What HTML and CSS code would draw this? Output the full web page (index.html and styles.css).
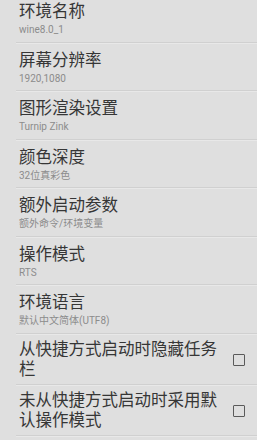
FILE: index.html
```html
<!DOCTYPE html>
<html lang="zh">
<head>
<meta charset="utf-8">
<link rel="stylesheet" href="styles.css">
</head>
<body>
<div class="list">
  <div class="item">
    <div class="title">环境名称</div>
    <div class="sub">wine8.0_1</div>
  </div>
  <div class="item">
    <div class="title">屏幕分辨率</div>
    <div class="sub">1920,1080</div>
  </div>
  <div class="item">
    <div class="title">图形渲染设置</div>
    <div class="sub">Turnip Zink</div>
  </div>
  <div class="item">
    <div class="title">颜色深度</div>
    <div class="sub">32位真彩色</div>
  </div>
  <div class="item">
    <div class="title">额外启动参数</div>
    <div class="sub">额外命令/环境变量</div>
  </div>
  <div class="item">
    <div class="title">操作模式</div>
    <div class="sub">RTS</div>
  </div>
  <div class="item">
    <div class="title">环境语言</div>
    <div class="sub">默认中文简体(UTF8)</div>
  </div>
  <div class="item check">
    <div class="title wrap">从快捷方式启动时隐藏任务栏</div>
    <span class="box"></span>
  </div>
  <div class="item check">
    <div class="title wrap">未从快捷方式启动时采用默认操作模式</div>
    <span class="box"></span>
  </div>
</div>
</body>
</html>
```
FILE: styles.css
```css
html, body {
  margin: 0;
  padding: 0;
  background: #dfdfdf;
  overflow: hidden;
}
body {
  font-family: "Roboto", "Noto Sans CJK SC", sans-serif;
  width: 257px;
  height: 440px;
}
.list {
  margin-top: -5px;
  padding-left: 16px;
}
.item {
  display: flex;
  flex-direction: column;
  padding: 6px 0 4.5px 3px;
  border-bottom: 1px solid #d0d0d0;
  box-shadow: 0 1px 0 #e8e8e8;
  margin-bottom: 1px;
}
.title {
  font-size: 16.5px;
  line-height: 21px;
  color: #363636;
}
.sub {
  margin-top: 1px;
  font-size: 10px;
  line-height: 14px;
  color: #8c8c8c;
}
.check {
  flex-direction: row;
  align-items: center;
  justify-content: space-between;
  padding-top: 5px;
  padding-bottom: 4px;
}
.wrap {
  width: 202px;
  line-height: 20px;
}
.box {
  width: 10px;
  height: 10px;
  border: 1.5px solid #5a5a5a;
  border-radius: 1px;
  margin-right: 12px;
  flex: none;
}
```
